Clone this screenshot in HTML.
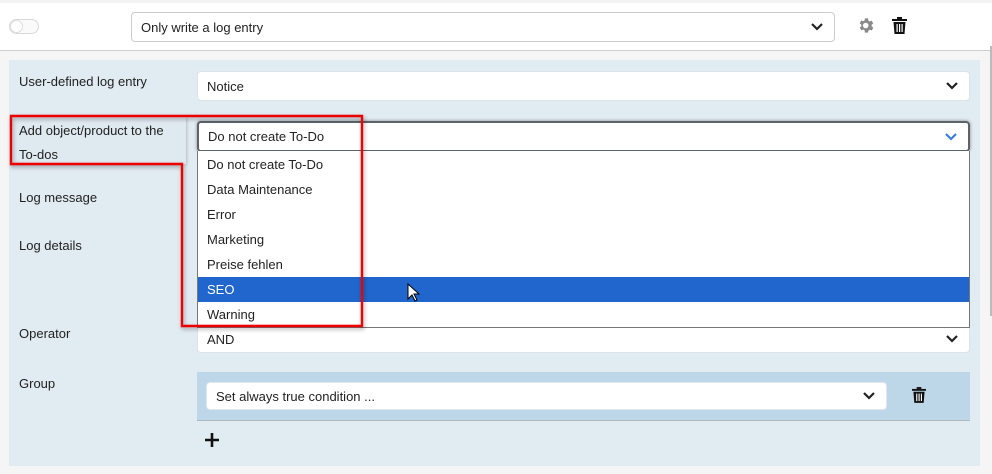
<!DOCTYPE html>
<html><head><meta charset="utf-8"><style>
*{box-sizing:border-box;margin:0;padding:0}
body{width:992px;height:474px;background:#f5f5f5;font-family:"Liberation Sans",sans-serif;font-size:13px;color:#222;position:relative;overflow:hidden}
.a{position:absolute}
.sel{position:absolute;background:#fff;border:1px solid #d6dadd;border-radius:4px;padding-left:9px;display:flex;align-items:center}
.chev{position:absolute;right:10px;top:50%;margin-top:-5px}
.lbl{position:absolute;left:19px;font-size:13px;color:#222}
.it{position:absolute;left:0;right:0;height:25px;padding-left:9px;line-height:25px}
</style></head><body>
<div class="a" style="left:0;top:0;width:992px;height:51px;background:#fff;border-bottom:1px solid #cfcfcf"></div>
<div class="a" style="left:0;top:0;width:992px;height:3px;background:#f3f3f3"></div>
<div class="a" style="left:9px;top:19px;width:30px;height:15px;border:1px solid #d8d8d8;border-radius:8px;background:#fafafa"></div>
<div class="a" style="left:10px;top:20px;width:13px;height:13px;border-radius:50%;background:#fff;border:1px solid #ddd"></div>
<div class="sel" style="left:131px;top:12px;width:704px;height:30px;border-color:#ccc">Only write a log entry
<svg class="chev" width="14" height="10" viewBox="0 0 14 10"><path d="M2 2l5 5 5-5" stroke="#222" stroke-width="2.2" fill="none"/></svg></div>
<svg class="a" style="left:857px;top:16px" width="19" height="19" viewBox="0 0 24 24"><path fill="#8a8a8a" d="M19.4 13a7.5 7.5 0 000-2l2.1-1.6-2-3.5-2.5 1a7.6 7.6 0 00-1.7-1L15 3h-4l-.4 2.7a7.6 7.6 0 00-1.7 1l-2.5-1-2 3.5L6.6 11a7.5 7.5 0 000 2l-2.1 1.6 2 3.5 2.5-1a7.6 7.6 0 001.7 1L11 21h4l.4-2.7a7.6 7.6 0 001.7-1l2.5 1 2-3.5zM12 15.5a3.5 3.5 0 110-7 3.5 3.5 0 010 7z" transform="translate(-1 0)"/></svg>
<svg class="a" style="left:892px;top:17px" width="15" height="17" viewBox="0 0 15 17"><rect x="0" y="2" width="15" height="2" fill="#111"/><rect x="5" y="0" width="5" height="2" fill="#111"/><path d="M1.5 5h12l-1 12h-10z" fill="#111"/><rect x="4.5" y="7" width="1.2" height="8" fill="#fff"/><rect x="7" y="7" width="1.2" height="8" fill="#fff"/><rect x="9.5" y="7" width="1.2" height="8" fill="#fff"/></svg>
<div class="a" style="left:990px;top:46px;width:2px;height:270px;background:#bbb"></div>

<div class="a" style="left:9px;top:60px;width:971px;height:406px;background:#e1ebf2"></div>
<div class="lbl" style="top:74px">User-defined log entry</div>
<div class="sel" style="left:197px;top:71px;width:773px;height:30px;border-color:#dde3e7">Notice
<svg class="chev" width="14" height="10" viewBox="0 0 14 10"><path d="M2 2l5 5 5-5" stroke="#222" stroke-width="2.2" fill="none"/></svg></div>

<div class="a" style="left:11px;top:117px;width:175px;height:47px;background:#dfe9f0;box-shadow:1px 1px 3px rgba(0,0,0,.2)"></div>
<div class="lbl" style="top:119px;line-height:24px">Add object/product to the<br>To-dos</div>
<div class="lbl" style="top:190px">Log message</div>
<div class="lbl" style="top:238px">Log details</div>
<div class="lbl" style="top:326px">Operator</div>
<div class="lbl" style="top:376px">Group</div>

<div class="sel" style="left:197px;top:325px;width:773px;height:28px;border-color:#dde3e7">AND
<svg class="chev" width="14" height="10" viewBox="0 0 14 10"><path d="M2 2l5 5 5-5" stroke="#222" stroke-width="2.2" fill="none"/></svg></div>

<div class="sel" style="left:197px;top:121px;width:773px;height:31px;border:2px solid #5d6368;box-shadow:0 0 3px #888">Do not create To-Do
<svg class="chev" width="14" height="10" viewBox="0 0 14 10"><path d="M2 2l5 5 5-5" stroke="#3b7ddd" stroke-width="2.2" fill="none"/></svg></div>
<div class="a" style="left:197px;top:151px;width:773px;height:177px;background:#fff;border:1px solid #777;border-top:none">
<div class="it" style="top:1px">Do not create To-Do</div>
<div class="it" style="top:26px">Data Maintenance</div>
<div class="it" style="top:51px">Error</div>
<div class="it" style="top:76px">Marketing</div>
<div class="it" style="top:101px">Preise fehlen</div>
<div class="it" style="top:126px;background:#2166cc;color:#fff">SEO</div>
<div class="it" style="top:151px">Warning</div>
</div>
<svg class="a" style="left:407px;top:283px" width="13" height="20" viewBox="0 0 13 20"><path d="M1 1v15l4-4 3 6 2-1-3-6h5z" fill="#fff" stroke="#000" stroke-width="1"/></svg>

<div class="a" style="left:197px;top:372px;width:773px;height:49px;background:#bdd7e8;border-bottom:1px solid #b0b8bd"></div>
<div class="sel" style="left:206px;top:382px;width:681px;height:28px;border-color:#e0e6ea">Set always true condition ...
<svg class="chev" width="14" height="10" viewBox="0 0 14 10"><path d="M2 2l5 5 5-5" stroke="#222" stroke-width="2.2" fill="none"/></svg></div>
<svg class="a" style="left:912px;top:387px" width="14" height="16" viewBox="0 0 15 17"><rect x="0" y="2" width="15" height="2" fill="#111"/><rect x="5" y="0" width="5" height="2" fill="#111"/><path d="M1.5 5h12l-1 12h-10z" fill="#111"/><rect x="4.5" y="7" width="1.2" height="8" fill="#fff"/><rect x="7" y="7" width="1.2" height="8" fill="#fff"/><rect x="9.5" y="7" width="1.2" height="8" fill="#fff"/></svg>
<svg class="a" style="left:205px;top:433px" width="14" height="14" viewBox="0 0 14 14"><path d="M7 0v14M0 7h14" stroke="#111" stroke-width="2.6"/></svg>

<svg class="a" style="left:0;top:0" width="992" height="474"><g fill="none" stroke="#e00" stroke-width="2.4" style="filter:drop-shadow(1px 2px 2px rgba(0,0,0,.35))"><path d="M11 116H362V326H182V164H11Z"/></g></svg>
</body></html>
